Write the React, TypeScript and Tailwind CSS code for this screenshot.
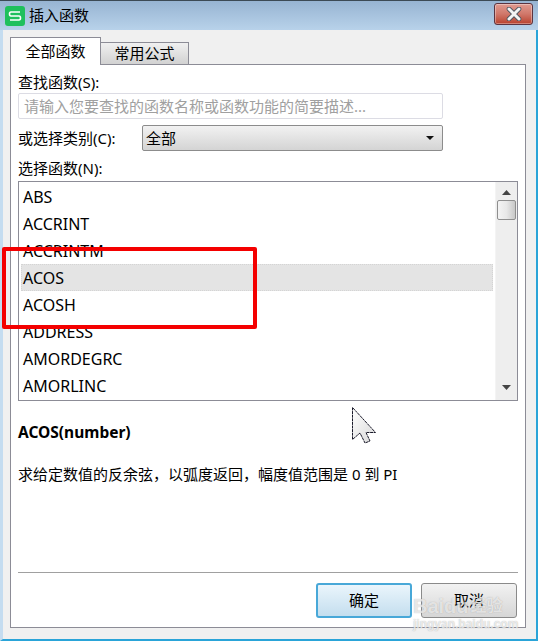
import React from 'react';

const FONT = "font-['Noto_Sans','Noto_Sans_CJK_SC',sans-serif]";
const FUNCS = ['ABS', 'ACCRINT', 'ACCRINTM', 'ACOS', 'ACOSH', 'ADDRESS', 'AMORDEGRC', 'AMORLINC'];

const TitleBar = () => (
  <div className="flex h-[30px] items-center border-t border-[#3c4a55] bg-linear-to-b from-[#97b4d2] to-[#b8d2ea] pl-[5px] pr-[5px]">
    <div className="flex h-[20px] w-[20px] items-center justify-center rounded-[3px] bg-[#1fc05c]">
      <svg viewBox="0 0 14 10" className="h-[10px] w-[14px]" fill="none" stroke="white" strokeWidth="1.6">
        <path d="M12 1H3Q1.5 1 1.5 3T3 5H11Q12.5 5 12.5 7T11 9H2" />
      </svg>
    </div>
    <span className="ml-[4px] text-[15px] text-black">插入函数</span>
    <div className="ml-auto mb-[3px] flex h-[22px] w-[39px] items-center justify-center rounded-[3px] border border-[#5c3440] bg-linear-to-b from-[#e09a90] via-[#d0776a] to-[#b8402c] shadow-[inset_0_0_0_1px_rgba(255,255,255,0.35)]">
      <svg viewBox="0 0 16 14" className="h-[14px] w-[16px]">
        <path d="M3 2L13 12M13 2L3 12" stroke="#4a5560" strokeWidth="4.6" strokeLinecap="round" />
        <path d="M3 2L13 12M13 2L3 12" stroke="#f4f4f4" strokeWidth="3" strokeLinecap="round" />
      </svg>
    </div>
  </div>
);

const Tabs = () => (
  <div className="relative z-10 flex h-[28px] items-end">
    <div className="flex h-[28px] w-[91px] items-center justify-center border border-b-0 border-[#8c8c96] bg-white text-[15px] text-black">
      全部函数
    </div>
    <div className="mb-px flex h-[22px] w-[88px] items-center justify-center border border-b-0 border-l-0 border-[#8c8c96] bg-linear-to-b from-[#f0f0f0] to-[#d2d2d2] text-[15px] text-black">
      常用公式
    </div>
  </div>
);

const Scrollbar = () => (
  <div className="flex w-[22px] flex-col items-center border-l border-[#f4f4f4] bg-[#eeeeee] py-[8px]">
    <svg viewBox="0 0 9 5" className="h-[5px] w-[9px]"><path d="M4.5 0L9 5H0Z" fill="#444" /></svg>
    <div className="mt-[5px] h-[20px] w-[19px] rounded-[2px] border border-[#8f8f8f] bg-linear-to-r from-[#f4f4f4] via-[#e8e8e8] to-[#c8c8c8]" />
    <svg viewBox="0 0 9 5" className="mt-auto mb-[2px] h-[5px] w-[9px]"><path d="M0 0H9L4.5 5Z" fill="#444" /></svg>
  </div>
);

const FunctionList = () => (
  <div className="mt-[4px] flex h-[220px] w-[500px] border border-[#8c8c96] bg-white">
    <div className="flex-1 pl-[2px] pr-[2px] pt-px">
      {FUNCS.map((name) => (
        <div
          key={name}
          className={`flex h-[27px] items-center pl-[2px] text-[16px] text-black ${name === 'ACOS' ? 'border border-dotted border-[#d4d4d4] bg-[#e4e4e4] pl-px' : ''}`}
        >
          {name}
        </div>
      ))}
    </div>
    <Scrollbar />
  </div>
);

const Cursor = () => (
  <svg viewBox="0 0 25 38" className="absolute left-[351px] top-[406px] h-[38px] w-[25px]">
    <defs>
      <linearGradient id="cursorFill" x1="0" y1="0" x2="1" y2="1">
        <stop offset="0" stopColor="#ffffff" />
        <stop offset="1" stopColor="#d8d8d8" />
      </linearGradient>
    </defs>
    <path d="M1.5 1.5V33.5L9 27L14 37L19 35L15 26.5H24.5Z" fill="url(#cursorFill)" stroke="#1a1a2a" strokeWidth="1" strokeDasharray="3 0.6" />
  </svg>
);

export default function App() {
  return (
    <div className={`relative h-[642px] w-[539px] overflow-hidden bg-white ${FONT}`}>
      <div className="h-[641px] w-[538px] border-b-[2px] border-l-[3px] border-r-[2px] border-b-[#2aa4d8] border-l-[#c4dcf0] border-r-[#2aa4d8] bg-[#f0f0f0]">
        <div className="-ml-[3px] -mr-[2px]">
          <TitleBar />
        </div>
        <div className="px-[7px] pt-[7px]">
          <Tabs />
          <div className="-mt-px flex h-[564px] w-[516px] flex-col border border-[#8c8c96] bg-white px-[7px]">
            <div className="mt-[8px] text-[15px] leading-[18px] text-black">查找函数(S):</div>
            <div className="mt-[2px] flex h-[26px] w-[425px] items-center rounded-[2px] border border-[#dcdce4] pl-[5px] text-[15px] text-[#a0a0a0]">
              请输入您要查找的函数名称或函数功能的简要描述...
            </div>
            <div className="mt-[6px] flex items-center">
              <span className="w-[124px] text-[15px] text-black">或选择类别(C):</span>
              <div className="flex h-[26px] w-[301px] items-center justify-between rounded-[2px] border border-[#8c8c8c] bg-linear-to-b from-[#f2f2f2] to-[#d4d4d4] pl-[3px] pr-[8px] text-[15px] text-black">
                全部
                <svg viewBox="0 0 8 4" className="h-[4px] w-[8px]"><path d="M0 0H8L4 4Z" fill="#111" /></svg>
              </div>
            </div>
            <div className="mt-[8px] text-[15px] leading-[18px] text-black">选择函数(N):</div>
            <FunctionList />
            <div className="mt-[21px] text-[15.5px] font-bold leading-[20px] text-black">ACOS(number)</div>
            <div className="mt-[22px] text-[15px] leading-[20px] text-black">求给定数值的反余弦，以弧度返回，幅度值范围是 0 到 PI</div>
            <div className="mt-auto h-px w-[500px] bg-[#a0a0a0]" />
            <div className="mb-[9px] mt-[10px] flex w-[499px] justify-end gap-[9px] text-[15px] text-black">
              <div className="flex h-[35px] w-[96px] items-center justify-center rounded-[3px] border-2 border-[#48a8d8] bg-linear-to-b from-[#eaf5fc] to-[#c4deee]">确定</div>
              <div className="flex h-[35px] w-[96px] items-center justify-center rounded-[3px] border border-[#8a8a8a] bg-linear-to-b from-[#f2f2f2] to-[#d6d6d6]">取消</div>
            </div>
          </div>
        </div>
      </div>

      {/* annotations on top of the screenshot */}
      <div className="absolute left-[2px] top-[247px] h-[82px] w-[255px] rounded-[2px] border-[4px] border-[#f40000]" />
      <Cursor />
      <div className="absolute left-[413px] top-[594px] w-[100px] font-['Liberation_Sans','Noto_Sans_CJK_SC',sans-serif] text-white/70 [text-shadow:0_0_1px_rgba(110,110,110,0.55)]">
        <div className="flex items-center text-[20px] font-bold leading-[24px]">
          Baidu<span className="ml-[2px] text-[16px]">经验</span>
        </div>
        <div className="text-[12px] font-bold leading-[12px]">jingyan.baidu.com</div>
      </div>
    </div>
  );
}
